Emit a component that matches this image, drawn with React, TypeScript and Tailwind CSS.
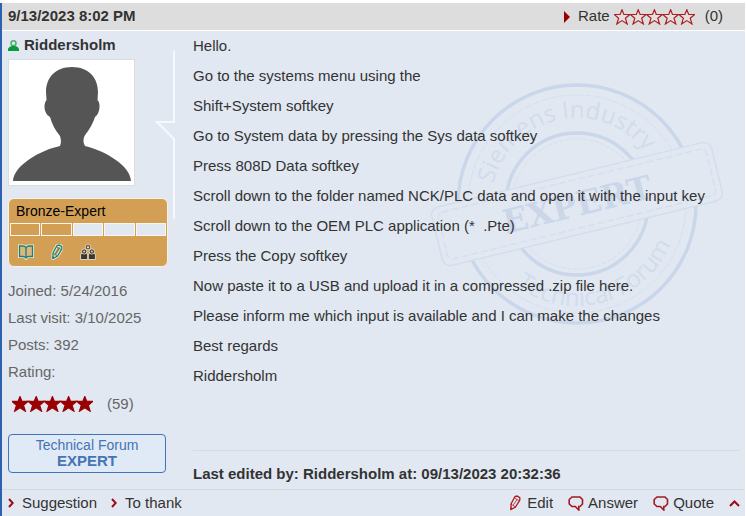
const lines = [
  'Hello.',
  'Go to the systems menu using the',
  'Shift+System softkey',
  'Go to System data by pressing the Sys data softkey',
  'Press 808D Data softkey',
  'Scroll down to the folder named NCK/PLC data and open it with the input key',
  'Scroll down to the OEM PLC application (*\u00a0 .Pte)',
  'Press the Copy softkey',
  'Now paste it to a USB and upload it in a compressed .zip file here.',
  'Please inform me which input is available and I can make the changes',
  'Best regards',
  'Riddersholm',
];

const stats = ['Joined: 5/24/2016', 'Last visit: 3/10/2025', 'Posts: 392', 'Rating:'];

function Stars({ filled }: { filled?: boolean }) {
  return (
    <svg width="81" height="16" viewBox="0 0 81 16" aria-hidden="true">
      {[0, 1, 2, 3, 4].map((i) => (
        <path
          key={i}
          transform={`translate(${i * 16.2} 0)`}
          d="M8 .8 9.900 5.500H15.800L11.400 9.300 13.200 15 8 11.600 2.800 15 4.600 9.300.2 5.500H6.100Z"
          fill={filled ? '#990000' : '#e6dfe0'}
          stroke={filled ? '#990000' : '#ab2024'}
          strokeWidth={filled ? 1.4 : 1.2}
        />
      ))}
    </svg>
  );
}

function Chevron() {
  return (
    <svg width="6" height="10" viewBox="0 0 6 10" fill="none" stroke="#a00c14" strokeWidth="2" aria-hidden="true">
      <path d="M1 1 4.7 5 1 9" />
    </svg>
  );
}

function Bubble() {
  return (
    <svg width="16" height="15" viewBox="0 0 16 15" fill="none" stroke="#a31a20" strokeWidth="1.6" aria-hidden="true">
      <path d="M4 1H12L14.500 3.500V8L12 10.500H10.800V14L7.300 10.500H4L1.200 8V3.500Z" />
    </svg>
  );
}

function Pencil({ color, halo }: { color: string; halo?: boolean }) {
  const d = 'M2 9 6 1.500 8 1 10.800 2.600V5L6.500 12 2 14.500Z';
  return (
    <svg width="12" height="16" viewBox="0 0 12 16" fill="none" aria-hidden="true">
      {halo && <path d={d} stroke="#f6ead6" strokeWidth="3" />}
      <path d={d} stroke={color} strokeWidth="1.3" />
      <path d="M5.500 3 9.800 5.500M2 9.300 6.300 11.800M4.300 10 8 4.500" stroke={color} strokeWidth=".8" />
      <path d="M1.500 12V15L4.200 13.500Z" fill={color} />
    </svg>
  );
}

function Book() {
  const d = 'M8 3.500Q7 2 5 2H1.500V12.500H5Q7.200 12.500 8 14 8.800 12.500 11 12.500H14.500V2H11Q9 2 8 3.500Z';
  return (
    <svg width="16" height="16" viewBox="0 0 16 16" fill="none" aria-hidden="true">
      <path d={d} stroke="#f6ead6" strokeWidth="3" />
      <path d={d} fill="#dcb67c" stroke="#148275" strokeWidth="1.3" />
      <path d="M8 3.500V14" stroke="#148275" strokeWidth="1.3" />
    </svg>
  );
}

function People() {
  return (
    <svg width="16" height="16" viewBox="0 0 16 16" aria-hidden="true">
      <g fill="#3a3732" stroke="#f6ead6" strokeWidth=".8">
        <path d="M.6 15.500V11Q.6 9 2.500 9H5.800Q7.700 9 7.700 11V15.500ZM8.300 15.500V11Q8.300 9 10.200 9H13.500Q15.400 9 15.400 11V15.500Z" />
        <circle cx="4.200" cy="7.500" r="2.600" />
        <circle cx="11.800" cy="7.500" r="2.600" />
        <circle cx="8" cy="3.200" r="2.700" />
      </g>
      <g fill="#e9cfa6">
        <circle cx="4.200" cy="7.500" r="1.100" />
        <circle cx="11.800" cy="7.500" r="1.100" />
        <circle cx="8" cy="3.200" r="1.200" />
      </g>
    </svg>
  );
}

function Avatar() {
  return (
    <div className="w-[127px] border border-[#dcdcdc] bg-white">
      <svg className="block w-full" viewBox="0 0 125 125" role="img" aria-label="Riddersholm">
        <path
          fill="#555555"
          d="M63 7C80 7 89 18 89 32L88.500 40C92 43 91 54 86 57C83 66 79 71 75.500 76C74 79 74 83 76 86C96 91 121 105 122 121H4C5 105 32 90 51 86C52.500 83 52 79 51 76C46 70 43 64 41 57C35 54 34 44 37.500 40L37 32C37 18 46 7 63 7Z"
        />
      </svg>
    </div>
  );
}

function ExpertStamp() {
  return (
    <svg className="pointer-events-none absolute top-[50px] right-[15px] w-[306px]" viewBox="-153 -123 306 246" aria-hidden="true">
      <defs>
        <path id="ring-top" d="M-86 0A86 86 0 0 1 86 0" />
        <path id="ring-bottom" d="M-102 0A102 102 0 0 0 102 0" />
      </defs>
      <g fill="none" stroke="#cad7ea">
        <circle r="119" strokeWidth="3.5" />
        <circle r="109" strokeWidth="1" strokeDasharray="7 2" stroke="#d5dfee" />
        <circle r="71" strokeWidth="3.5" />
        <circle r="65" strokeWidth="1" strokeDasharray="4 2" stroke="#d5dfee" />
      </g>
      <g fill="#d1dcec" fontFamily="'Open Sans', sans-serif" fontSize="24">
        <text textAnchor="middle" transform="rotate(-12)">
          <textPath href="#ring-top" startOffset="50%">Siemens Industry</textPath>
        </text>
        <text textAnchor="middle" transform="rotate(-15)">
          <textPath href="#ring-bottom" startOffset="50%">Technical Forum</textPath>
        </text>
      </g>
      <g transform="rotate(-13.7)">
        <rect x="-144" y="-30" width="288" height="60" rx="8" fill="#e1e8f2" stroke="#d3deed" strokeWidth="1.5" />
        <rect x="-138" y="-24" width="276" height="48" rx="5" fill="none" stroke="#d5dfee" strokeWidth="1.5" strokeDasharray="7 3" />
        <text y="12" textAnchor="middle" fill="#cbd7e9" fontFamily="'DejaVu Serif', serif" fontWeight="bold" fontSize="33">
          EXPERT
        </text>
      </g>
    </svg>
  );
}

function Author() {
  return (
    <aside className="w-[185px] shrink-0 pb-4 pl-1.5">
      <div className="flex h-7 items-center gap-[5px] font-bold">
        <svg width="11" height="11" viewBox="0 0 11 11" aria-hidden="true">
          <circle cx="5.500" cy="3.300" r="2.500" fill="#e1e8f2" stroke="#4fae70" strokeWidth="1.500" />
          <path d="M0 11V8.500Q1.500 6 4 6H7Q9.500 6 11 8.500V11Z" fill="#0a9a3c" />
        </svg>
        <a href="#profile">Riddersholm</a>
      </div>
      <div className="flex">
        <Avatar />
        <svg className="-mt-2 ml-5 -mb-9 block" width="21" height="168" viewBox="0 0 21 168" fill="none" stroke="#f5f8fc" strokeWidth="2" aria-hidden="true">
          <path d="M19 0V71H2L19 88V168" />
        </svg>
      </div>

      <div className="mt-3 w-40 rounded-md border border-[#f8f1e6] bg-[#d39f55] pb-0.5">
        <div className="px-[7px] text-sm leading-6 text-black">Bronze-Expert</div>
        <div className="flex gap-px px-px">
          {[0, 1, 2, 3, 4].map((i) => (
            <span key={i} className={`h-[13px] flex-1 border border-[#fbf6ee] ${i < 2 ? 'bg-[#d39f55]' : 'bg-[#e1e8f2]'}`} />
          ))}
        </div>
        <div className="flex items-center gap-[17px] px-[9px] pt-2 pb-1">
          <Book />
          <Pencil color="#148275" halo />
          <People />
        </div>
      </div>

      <ul className="mt-2.5 leading-[27px] text-[#666666]">
        {stats.map((stat) => (
          <li key={stat}>{stat}</li>
        ))}
      </ul>
      <div className="flex h-[38px] items-center gap-3.5 pl-1 text-[#666666]">
        <Stars filled />
        <span>(59)</span>
      </div>
      <div className="mt-[11px] w-[158px] rounded border border-[#3f75b8] bg-[#e0eaf6] py-[3px] text-center leading-4 text-[#4474b4]">
        <div className="text-sm leading-[15px]">Technical Forum</div>
        <div className="font-bold">EXPERT</div>
      </div>
    </aside>
  );
}

export default function App() {
  return (
    <article className="mt-[3px] mr-px border-b border-l-2 border-b-[#d6d9de] border-l-[#2c61b0] bg-[#e1e8f2] font-['Liberation_Sans',Arial,sans-serif] text-[15px] text-[#333333]">
      <header className="flex h-7 items-center justify-between border-b border-white bg-[#dddddd] pr-[22px] pl-1.5">
        <time className="font-bold">9/13/2023 8:02 PM</time>
        <div className="flex items-center">
          <svg className="mr-2" width="6" height="12" viewBox="0 0 6 12" aria-hidden="true">
            <path d="M0 0 6 6 0 12Z" fill="#990000" />
          </svg>
          <a href="#rate" className="mr-1 flex items-center gap-1">
            Rate
            <Stars />
          </a>
          <span className="ml-1.5">(0)</span>
        </div>
      </header>

      <div className="relative flex">
        <ExpertStamp />
        <Author />
        <div className="relative flex min-w-0 flex-1 flex-col pr-1.5 pl-1.5">
          <div className="leading-[30px]">
            {lines.map((line) => (
              <p key={line}>{line}</p>
            ))}
          </div>
          <div className="mt-auto border-t border-[#dadada] pt-2 leading-[30px] font-bold">
            Last edited by: Riddersholm at: 09/13/2023 20:32:36
          </div>
        </div>
      </div>

      <footer className="flex h-[27px] items-center justify-between border-t border-[#d6d9de] pr-[5px] pl-1.5">
        <nav className="flex gap-3.5">
          <a href="#suggestion" className="flex items-center gap-2">
            <Chevron />
            Suggestion
          </a>
          <a href="#thank" className="flex items-center gap-2">
            <Chevron />
            To thank
          </a>
        </nav>
        <nav className="flex items-center gap-[15px]">
          <a href="#edit" className="flex items-center gap-1.5">
            <Pencil color="#b0161c" />
            Edit
          </a>
          <a href="#answer" className="flex items-center gap-1">
            <Bubble />
            Answer
          </a>
          <a href="#quote" className="flex items-center gap-1">
            <Bubble />
            Quote
          </a>
          <a href="#top" aria-label="To top">
            <svg width="11" height="7" viewBox="0 0 11 7" fill="none" stroke="#a00c14" strokeWidth="2" aria-hidden="true">
              <path d="M1 6 5.500 1.500 10 6" />
            </svg>
          </a>
        </nav>
      </footer>
    </article>
  );
}
